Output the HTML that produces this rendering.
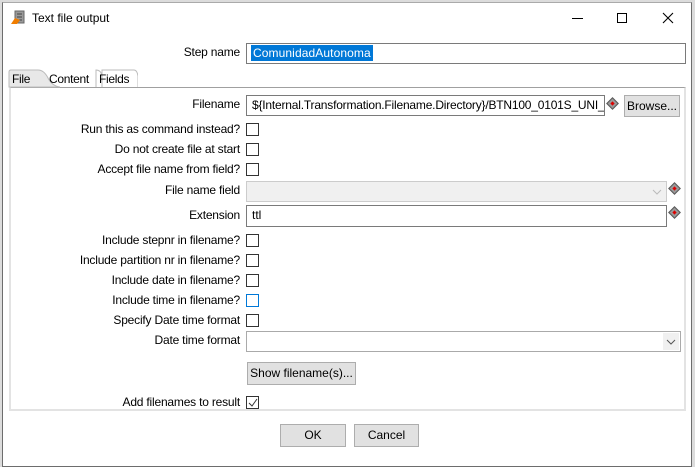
<!DOCTYPE html>
<html><head><meta charset="utf-8"><style>
*{box-sizing:border-box;margin:0;padding:0}
body{width:695px;height:467px;background:#dcdcdc;position:relative;overflow:hidden;font-family:"Liberation Sans",sans-serif;font-size:12px;color:#000}
.win{position:absolute;left:2px;top:2px;width:690px;height:465px;background:#fff;border:1px solid #6d6d6d;border-top-color:#aaa}
.a{position:absolute}
.lbl{position:absolute;right:455px;white-space:nowrap;font-size:12px;letter-spacing:-0.2px}
.cb{position:absolute;left:246px;width:13px;height:13px;border:1px solid #333;background:#fff}
.tf{position:absolute;border:1px solid #7a7a7a;background:#fff;padding:2px 5px;white-space:nowrap;overflow:hidden}
.btn{position:absolute;background:#e1e1e1;border:1px solid #adadad;text-align:center;line-height:20px}
.dia{position:absolute;width:9px;height:9px;transform:rotate(45deg);background:#999;border:1px solid #555}
.dia::after{content:"";position:absolute;left:2px;top:2px;width:3px;height:3px;background:#d00}
.tab{position:absolute;top:72px;letter-spacing:-0.3px}
</style></head><body>
<div class="win"></div>
<svg class="a" style="left:10px;top:10px" width="16" height="16"><rect x="5" y="1" width="9" height="12" fill="#999" stroke="#666"/><line x1="7" y1="4" x2="12" y2="4" stroke="#444"/><line x1="7" y1="7" x2="12" y2="7" stroke="#444"/><line x1="7" y1="10" x2="12" y2="10" stroke="#444"/><path d="M1 14 L5 8 L10 10 L7 14 Z" fill="#f07d00"/></svg>
<div class="a" style="left:32px;top:11px;font-size:12px">Text file output</div>
<div class="a" style="left:572px;top:18px;width:11px;height:1px;background:#000"></div>
<div class="a" style="left:617px;top:13px;width:10px;height:10px;border:1px solid #000"></div>
<svg class="a" style="left:662px;top:12px" width="12" height="12"><path d="M1 1L11 11M11 1L1 11" stroke="#000" stroke-width="1.1"/></svg>
<div class="lbl" style="top:45px">Step name</div>
<div class="tf" style="left:246px;top:43px;width:440px;height:21px;padding:2px 4px"><span style="background:#0078d7;color:#fff;padding:1px 2px;letter-spacing:0.1px">ComunidadAutonoma</span></div>
<div class="a" style="left:9px;top:87px;width:677px;height:324px;border:2px solid #e3e3e3;border-top:1px solid #a0a0a0"></div>
<svg class="a" style="left:8px;top:68px" width="130" height="20"><path d="M1 19 L1 4 Q1 2 3 2 L30 2 Q36 2 40 10 Q44 18 52 19 Z" fill="#e8e8e8" stroke="#bbb"/><path d="M88 19 L88 2 Q93 2 94 8 L94 19 M94 19 L94 2 L126 2 Q129 2 130 8 L130 19" fill="none" stroke="#bbb"/></svg>
<div class="tab" style="left:12px">File</div>
<div class="tab" style="left:49px">Content</div>
<div class="tab" style="left:99px">Fields</div>
<div class="lbl" style="top:97px">Filename</div>
<div class="tf" style="left:246px;top:95px;width:359px;height:21px;letter-spacing:-0.2px">${Internal.Transformation.Filename.Directory}/BTN100_0101S_UNI_/</div>
<div class="dia" style="left:608px;top:99px"></div>
<div class="btn" style="left:624px;top:95px;width:56px;height:22px">Browse...</div>
<div class="lbl" style="top:122px">Run this as command instead?</div><div class="cb" style="top:123px"></div>
<div class="lbl" style="top:142px">Do not create file at start</div><div class="cb" style="top:143px"></div>
<div class="lbl" style="top:162px">Accept file name from field?</div><div class="cb" style="top:163px"></div>
<div class="lbl" style="top:183px">File name field</div>
<div class="a" style="left:246px;top:181px;width:421px;height:21px;border:1px solid #ccc;background:#f0f0f0"></div>
<svg class="a" style="left:652px;top:188px" width="10" height="8"><path d="M1 2L5 6L9 2" stroke="#bbb" fill="none"/></svg>
<div class="dia" style="left:670px;top:184px"></div>
<div class="lbl" style="top:208px">Extension</div>
<div class="tf" style="left:246px;top:205px;width:421px;height:22px">ttl</div>
<div class="dia" style="left:670px;top:208px"></div>
<div class="lbl" style="top:233px">Include stepnr in filename?</div><div class="cb" style="top:234px"></div>
<div class="lbl" style="top:253px">Include partition nr in filename?</div><div class="cb" style="top:254px"></div>
<div class="lbl" style="top:273px">Include date in filename?</div><div class="cb" style="top:274px"></div>
<div class="lbl" style="top:293px">Include time in filename?</div><div class="cb" style="top:294px;border-color:#0078d7"></div>
<div class="lbl" style="top:313px">Specify Date time format</div><div class="cb" style="top:314px"></div>
<div class="lbl" style="top:333px">Date time format</div>
<div class="a" style="left:246px;top:331px;width:435px;height:21px;border:1px solid #aaa;background:#fff"></div>
<div class="a" style="left:663px;top:333px;width:16px;height:17px;background:#f0f0f0"></div>
<svg class="a" style="left:666px;top:338px" width="10" height="8"><path d="M1 2L5 6L9 2" stroke="#555" fill="none"/></svg>
<div class="btn" style="left:247px;top:362px;width:109px;height:23px">Show filename(s)...</div>
<div class="lbl" style="top:395px">Add filenames to result</div>
<div class="cb" style="top:396px"></div>
<svg class="a" style="left:248px;top:398px" width="10" height="10"><path d="M1 5L4 8L9 1" stroke="#333" fill="none"/></svg>
<div class="btn" style="left:280px;top:424px;width:66px;height:23px">OK</div>
<div class="btn" style="left:354px;top:424px;width:65px;height:23px">Cancel</div>
</body></html>
